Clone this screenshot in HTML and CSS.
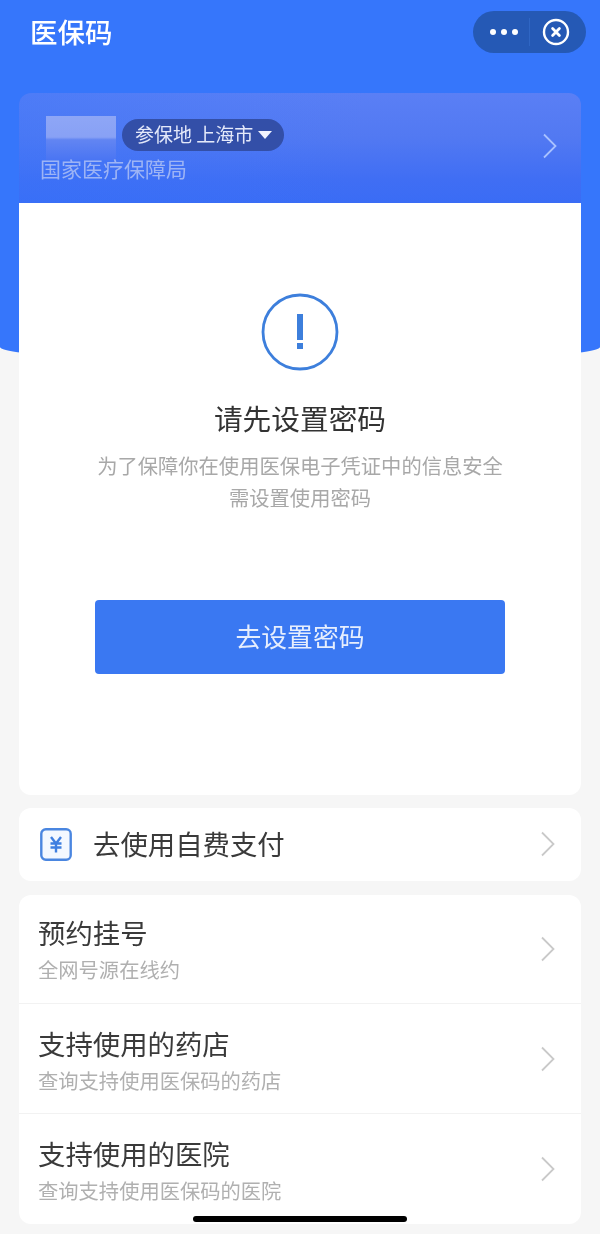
FILE: index.html
```html
<!DOCTYPE html>
<html lang="zh-CN">
<head>
<meta charset="utf-8">
<title>医保码</title>
<link rel="stylesheet" href="styles.css">
</head>
<body>
<div class="page">
  <div class="hero-bg"></div>
  <header class="topbar">
    <h1 class="app-title">医保码</h1>
    <div class="capsule">
      <div class="capsule-more"><i></i><i></i><i></i></div>
      <div class="capsule-line"></div>
      <svg class="capsule-close" width="28" height="28" viewBox="0 0 28 28"><circle cx="14" cy="14" r="12" fill="none" stroke="#fff" stroke-width="2.400"/><path d="M10.600 10.600l6.800 6.800M17.400 10.600l-6.800 6.800" stroke="#fff" stroke-width="2.800" stroke-linecap="round"/></svg>
    </div>
  </header>

  <main class="content">
    <section class="banner">
      <div class="banner-main">
        <div class="banner-top">
          <div class="mosaic"></div>
          <div class="pill">参保地 上海市<span class="caret"></span></div>
        </div>
        <div class="agency">国家医疗保障局</div>
      </div>
      <svg class="chev" width="16" height="26" viewBox="0 0 16 26"><path d="M2 1.500l11.500 11.500L2 24.500" fill="none" stroke="#a9c2ff" stroke-width="1.800"/></svg>
    </section>

    <section class="main-card">
      <svg class="warn" width="78" height="78" viewBox="0 0 78 78"><circle cx="39" cy="39" r="37" fill="none" stroke="#3d7fdc" stroke-width="2.800"/><rect x="36" y="21" width="6" height="26" fill="#3d7fdc"/><rect x="36" y="50" width="6" height="6" fill="#3d7fdc"/></svg>
      <h2 class="card-title">请先设置密码</h2>
      <p class="card-desc">为了保障你在使用医保电子凭证中的信息安全<br>需设置使用密码</p>
      <div class="btn">去设置密码</div>
    </section>

    <section class="group pay-row">
      <svg class="yen" width="32" height="33" viewBox="0 0 32 33"><rect x="1.300" y="1.300" width="29.400" height="30.400" rx="4.500" fill="#f3f8ff" stroke="#4a86e0" stroke-width="2.400"/><path d="M11 9l5 6.500 5-6.500M10.500 15.500h11M10.500 19.500h11M16 15.500v9" fill="none" stroke="#3f7fe0" stroke-width="2.400"/></svg>
      <span class="row-title">去使用自费支付</span>
      <svg class="chev-gray" width="16" height="26" viewBox="0 0 16 26"><path d="M2 1.500l11.500 11.500L2 24.500" fill="none" stroke="#c9c9c9" stroke-width="1.800"/></svg>
    </section>

    <section class="group list">
      <div class="list-row first">
        <div class="row-text"><div class="row-title">预约挂号</div><div class="row-sub">全网号源在线约</div></div>
        <svg class="chev-gray" width="16" height="26" viewBox="0 0 16 26"><path d="M2 1.500l11.500 11.500L2 24.500" fill="none" stroke="#c9c9c9" stroke-width="1.800"/></svg>
      </div>
      <div class="list-row">
        <div class="row-text"><div class="row-title">支持使用的药店</div><div class="row-sub">查询支持使用医保码的药店</div></div>
        <svg class="chev-gray" width="16" height="26" viewBox="0 0 16 26"><path d="M2 1.500l11.500 11.500L2 24.500" fill="none" stroke="#c9c9c9" stroke-width="1.800"/></svg>
      </div>
      <div class="list-row">
        <div class="row-text"><div class="row-title">支持使用的医院</div><div class="row-sub">查询支持使用医保码的医院</div></div>
        <svg class="chev-gray" width="16" height="26" viewBox="0 0 16 26"><path d="M2 1.500l11.500 11.500L2 24.500" fill="none" stroke="#c9c9c9" stroke-width="1.800"/></svg>
      </div>
    </section>
  </main>
  <div class="home-bar"></div>
</div>
</body>
</html>
```
FILE: styles.css
```css
* { box-sizing: border-box; margin: 0; padding: 0; }
html, body { width: 600px; height: 1234px; overflow: hidden; }
body { font-family: "Noto Sans CJK SC", "Noto Sans", sans-serif; background: #f6f6f6; }
.page { position: relative; width: 600px; height: 1234px; overflow: hidden; background: #f6f6f6; filter: blur(0.35px); }
.hero-bg {
  position: absolute; left: 0; top: 0; width: 600px; height: 362px;
  background: #3676fb;
  border-radius: 0 0 50% 50% / 0 0 15px 15px;
}
.topbar {
  position: relative; height: 93px; padding: 11px 14px 0 30px;
  display: flex; justify-content: space-between; align-items: flex-start;
}
.app-title { font-size: 27.500px; font-weight: 500; line-height: 40px; color: #fff; }
.capsule {
  width: 113px; height: 42px; border-radius: 21px; background: #2559b5;
  display: flex; align-items: center; padding-left: 17px;
}
.capsule-more { display: flex; gap: 5px; width: 28px; }
.capsule-more i { width: 6px; height: 6px; border-radius: 50%; background: #fff; flex: none; }
.capsule-line { width: 1px; height: 28px; background: #2f66c4; margin-left: 11px; }
.capsule-close { margin-left: 12px; }
.content { position: relative; padding: 0 19px; }
.banner {
  height: 110px; border-radius: 12px 12px 0 0;
  background: linear-gradient(100deg, rgba(54,118,251,0.35) 0%, rgba(54,118,251,0) 60%),
              linear-gradient(180deg, #5a7ff5 0%, #5279f2 40%, #406ef4 78%, #3a6cf5 100%);
  display: flex; justify-content: space-between; align-items: flex-start;
  padding: 23px 23px 0 21px;
}
.banner-main { display: flex; flex-direction: column; }
.banner-top { display: flex; align-items: flex-start; margin-left: 6px; height: 40px; }
.mosaic {
  width: 70px; height: 44px; margin-right: 4px;
  background: linear-gradient(180deg, #8ea6f6 0%, #88a1f5 48%, #6285f2 54%, #4a75f3 100%);
}
.pill {
  height: 32px; margin-top: 3px; padding: 0 12px 0 13px; border-radius: 16px; margin-left: 2px;
  background: #334fa8; color: #e4e9fa; font-size: 19px; line-height: 28px; white-space: nowrap;
  display: flex; align-items: center;
}
.pill { padding-bottom: 3px; }
.caret {
  width: 0; height: 0; margin-left: 5px; margin-top: 3px;
  border-left: 7px solid transparent; border-right: 7px solid transparent; border-top: 8px solid #f0f3ff;
}
.agency { font-size: 21px; line-height: 30px; color: #9db4f5; margin-top: -3px; }
.chev { margin-top: 17px; }
.main-card {
  height: 592px; background: #fff; border-radius: 0 0 12px 12px;
  display: flex; flex-direction: column; align-items: center; padding-top: 90px;
}
.card-title { font-size: 28.700px; font-weight: 400; line-height: 42px; color: #333; margin-top: 26px; }
.card-desc { font-size: 20.300px; line-height: 32px; color: #a8a8a8; text-align: center; margin-top: 10px; }
.btn {
  width: 410px; height: 74px; margin-top: 87px; border-radius: 4px; background: #3a78f2;
  color: #e6eefd; font-size: 25.800px; line-height: 72px; text-align: center;
}
.group { background: #fff; border-radius: 12px; }
.pay-row {
  height: 73px; margin-top: 13px; display: flex; align-items: center; padding: 0 25px 0 21px;
}
.yen { flex: none; margin-right: 21px; }
.row-title { font-size: 27.400px; line-height: 38px; color: #3a3a3a; white-space: nowrap; }
.pay-row .row-title { margin-top: -4px; }
.pay-row .chev-gray { margin-left: auto; margin-top: -2px; }
.list { height: 329px; margin-top: 14px; }
.list-row {
  height: 110px; display: flex; align-items: center; justify-content: space-between;
  padding: 0 25px 0 19px; border-top: 1px solid #f2f2f2;
}
.list-row.first { height: 108px; border-top: 0; }
.list-row.first .row-text { margin-top: -3px; }
.row-sub { font-size: 20.300px; line-height: 28px; color: #b0b0b0; margin-top: 4px; }
.home-bar {
  position: absolute; left: 193px; top: 1216px; width: 214px; height: 6px; border-radius: 3px; background: #000;
}
```
